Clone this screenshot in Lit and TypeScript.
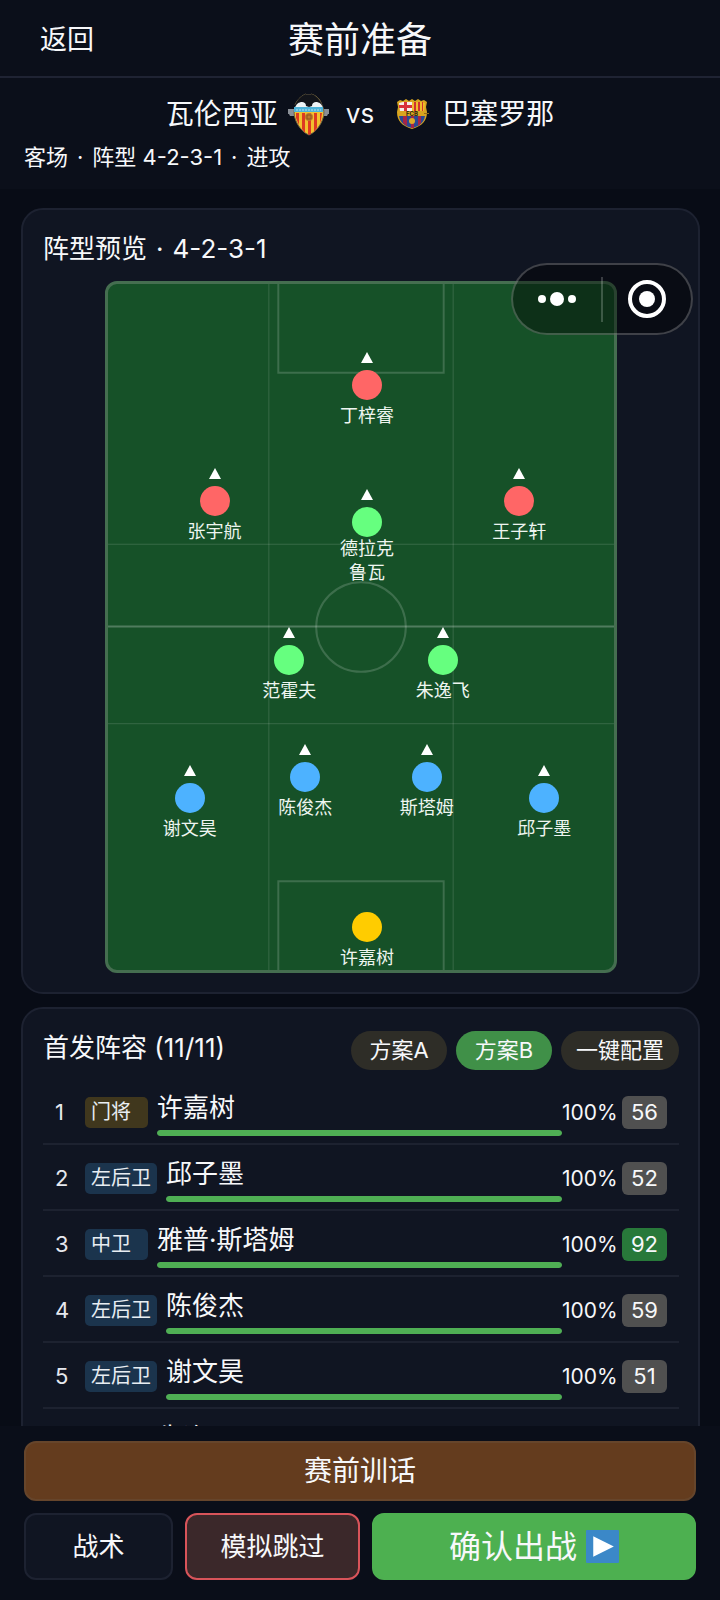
import { LitElement, css, html, nothing, svg } from "lit";
import { customElement, property, state } from "lit/decorators.js";
import { classMap } from "lit/directives/class-map.js";
import { styleMap } from "lit/directives/style-map.js";

type Role = "gk" | "def" | "mid" | "fwd";

interface Spot {
  name: string;
  role: Role;
  x: number;
  y: number;
}

interface Starter {
  name: string;
  position: string;
  role: Role;
  stamina: number;
  rating: number;
}

// pitch units, spots are converted to percentages when drawn
const PITCH_W = 508;
const PITCH_H = 688;

const SPOTS: Spot[] = [
  { name: "丁梓睿", role: "fwd", x: 260, y: 101 },
  { name: "张宇航", role: "fwd", x: 107, y: 218 },
  { name: "德拉克鲁瓦", role: "mid", x: 260, y: 239 },
  { name: "王子轩", role: "fwd", x: 413, y: 218 },
  { name: "范霍夫", role: "mid", x: 182, y: 377 },
  { name: "朱逸飞", role: "mid", x: 336, y: 377 },
  { name: "陈俊杰", role: "def", x: 198, y: 494 },
  { name: "斯塔姆", role: "def", x: 320, y: 494 },
  { name: "谢文昊", role: "def", x: 82, y: 515 },
  { name: "邱子墨", role: "def", x: 438, y: 515 },
  { name: "许嘉树", role: "gk", x: 260, y: 645 },
];

const STARTERS: Starter[] = [
  { name: "许嘉树", position: "门将", role: "gk", stamina: 100, rating: 56 },
  { name: "邱子墨", position: "左后卫", role: "def", stamina: 100, rating: 52 },
  { name: "雅普·斯塔姆", position: "中卫", role: "def", stamina: 100, rating: 92 },
  { name: "陈俊杰", position: "左后卫", role: "def", stamina: 100, rating: 59 },
  { name: "谢文昊", position: "左后卫", role: "def", stamina: 100, rating: 51 },
  { name: "朱逸飞", position: "后腰", role: "mid", stamina: 100, rating: 58 },
];

@customElement("formation-pitch")
export class FormationPitch extends LitElement {
  @property({ attribute: false }) spots: Spot[] = [];

  render() {
    return html`
      <div class="pitch">
        <svg class="lines" viewBox="0 0 508 688" preserveAspectRatio="none">
          <g class="zones">
            <path d="M161.5 0V688M346.5 0V688M0 261H508M0 441H508" />
          </g>
          <path class="half" d="M0 343.5H508" />
          <g class="marks">
            <rect x="171" y="-2" width="166" height="91" />
            <rect x="171" y="599" width="166" height="91" />
            <circle cx="254" cy="344" r="45" />
          </g>
        </svg>
        ${this.spots.map((spot) => this.renderSpot(spot))}
      </div>
    `;
  }

  renderSpot(spot: Spot) {
    const place = {
      left: `${(spot.x / PITCH_W) * 100}%`,
      top: `${(spot.y / PITCH_H) * 100}%`,
    };
    return html`
      <div class="spot" style=${styleMap(place)}>
        ${spot.role === "gk"
          ? nothing
          : html`<svg class="arrow" viewBox="0 0 12 11"><path d="M6 0L12 11H0z" /></svg>`}
        <span class="dot ${spot.role}"></span>
        <span class="name">${spot.name}</span>
      </div>
    `;
  }

  static styles = css`
    :host {
      display: block;
      width: 100%;
      max-width: 512px;
      margin: 0 auto;
    }

    .pitch {
      position: relative;
      box-sizing: border-box;
      aspect-ratio: 512 / 692;
      background: #165128;
      border: 3px solid #456e50;
      border-radius: 12px;
    }

    .lines {
      display: block;
      width: 100%;
      height: 100%;
      fill: none;
      stroke: #ffffff;
    }

    .zones {
      stroke-opacity: 0.15;
      stroke-width: 1;
    }

    .half {
      stroke-opacity: 0.25;
      stroke-width: 2;
    }

    .marks {
      stroke-opacity: 0.17;
      stroke-width: 2;
    }

    /* the anchor is the centre of the dot, 33px below the top of the marker */
    .spot {
      position: absolute;
      display: flex;
      flex-direction: column;
      align-items: center;
      width: 56px;
      margin: -33px 0 0 -28px;
    }

    .arrow {
      flex: none;
      width: 12px;
      height: 11px;
      fill: #ffffff;
      margin-bottom: 7px;
    }

    .dot {
      flex: none;
      width: 30px;
      height: 30px;
      border-radius: 50%;
    }

    .dot.gk {
      background: #ffcc00;
      margin-top: 18px;
    }

    .dot.def {
      background: #4db2ff;
    }

    .dot.mid {
      background: #66ff7f;
    }

    .dot.fwd {
      background: #ff6666;
    }

    .name {
      display: flex;
      align-items: center;
      min-height: 32px;
      font-size: 18px;
      line-height: 24px;
      text-align: center;
      color: #eef5f0;
    }
  `;
}

@customElement("lineup-row")
export class LineupRow extends LitElement {
  @property({ type: Number }) index = 1;
  @property({ attribute: false }) player!: Starter;

  render() {
    const { name, position, role, stamina, rating } = this.player;
    return html`
      <div class="row">
        <span class="index">${this.index}</span>
        <span class="position ${role}">${position}</span>
        <div class="main">
          <span class="name">${name}</span>
          <div class="track">
            <div class="fill" style=${styleMap({ width: `${stamina}%` })}></div>
          </div>
        </div>
        <span class="stamina">${stamina}%</span>
        <span class=${classMap({ rating: true, high: rating >= 80 })}>${rating}</span>
      </div>
    `;
  }

  static styles = css`
    :host {
      display: block;
    }

    .row {
      display: flex;
      align-items: center;
      box-sizing: border-box;
      height: 66px;
      padding: 2px 12px 0;
      border-bottom: 2px solid #1d2230;
    }

    .index {
      width: 30px;
      font-size: 22px;
      color: #e6e8ee;
    }

    .position {
      box-sizing: border-box;
      min-width: 63px;
      margin-right: 9px;
      padding: 0 6px;
      border-radius: 5px;
      font-size: 20px;
      line-height: 31px;
      color: #e8edf2;
      white-space: nowrap;
    }

    .position.gk {
      background: #40371d;
    }

    .position.def {
      background: #1b344d;
    }

    .position.mid {
      background: #1c4130;
    }

    .main {
      flex: 1;
      min-width: 0;
      display: flex;
      flex-direction: column;
      gap: 2px;
    }

    .name {
      font-size: 26px;
      line-height: 40px;
      white-space: nowrap;
    }

    .track {
      height: 6px;
      border-radius: 3px;
      background: #262b38;
      overflow: hidden;
    }

    .fill {
      height: 100%;
      border-radius: 3px;
      background: #4faf54;
    }

    .stamina {
      width: 60px;
      font-size: 21px;
    }

    .rating {
      width: 45px;
      border-radius: 6px;
      font-size: 22px;
      line-height: 33px;
      text-align: center;
      background: #505050;
    }

    .rating.high {
      background: #28793a;
    }
  `;
}

@customElement("app-root")
export class AppRoot extends LitElement {
  @state() plan = "B";

  homeCrest() {
    return svg`
      <svg class="crest" viewBox="0 0 44 44" aria-hidden="true">
        <path d="M2 17h6v7H4l-1-2H2zM43 17h-6v7h4l1-2h1z" fill="#8a8f96" />
        <path d="M9 13C12 6 17 3 20 2l1 1h3l1-1c4 1 9 4 11 11 3 6 2 11 0 16-3 7-8 12-13 14-5-2-10-7-13-14-2-5-3-10 0-16z" fill="#f2c230" stroke="#6b5f45" />
        <path d="M8 16C11 6 17 3 20 2l1 1h3l1-1c4 1 10 5 12 14z" fill="#12141a" />
        <path d="M9 16c1-4 4-6 7-6 2 0 4 1 4 4l3 1 3-1c0-3 2-4 4-4 3 0 6 2 7 6z" fill="#eef3f5" />
        <path d="M8 15h29v5H8z" fill="#4eb3d8" />
        <path d="M10 18h25" stroke="#b7dfec" stroke-dasharray="2 1" />
        <path d="M10 21h3v12l-3-7zM16 21h3v20l-3-4zM22 21h3v21l-2 1-1-1zM28 21h3v15l-3 4zM34 21h2l-1 7-1 3z" fill="#de3b22" />
        <circle cx="23" cy="25" r="4" fill="#c17a2b" />
        <path d="M21 23h4v4h-4z" fill="none" stroke="#8f5520" />
      </svg>
    `;
  }

  awayCrest() {
    return svg`
      <svg class="crest" viewBox="0 0 44 44" aria-hidden="true">
        <path d="M7 10l3-2 3 1 3-2 3 2 3-2 3 2 3-2 3 2 3-1 3 2-1 5 1 5c0 9-5 14-15 17C12 34 7 29 7 20l1-5z" fill="#d9a520" />
        <path d="M9 11l4-1h9v9H10z" fill="#f4efe9" />
        <path d="M14 10h3v9h-3zM9 13h13v3H9z" fill="#d8323a" />
        <path d="M22 10h9l4 1-1 8H22z" fill="#f0bc2c" />
        <path d="M24 10h2v9h-2zM28 10h2v9h-2zM32 10h1v9h-1z" fill="#cf3330" />
        <path d="M9 24h26c-1 6-5 10-13 12C14 34 10 30 9 24z" fill="#2a4a94" />
        <path d="M13 24h4v10l-4-3zM21 24h3v12h-3zM28 24h3v7l-3 3z" fill="#a52547" />
        <circle cx="22" cy="29" r="3" fill="#e0ac28" />
        <path d="M34 21h5v1h-5z" fill="#8f6a1c" />
        <text x="22" y="24" text-anchor="middle" font-size="6" font-weight="700" fill="#2b2410">FCB</text>
      </svg>
    `;
  }

  planButton(id: string) {
    return html`
      <button
        class=${classMap({ chip: true, active: this.plan === id })}
        @click=${() => (this.plan = id)}
      >方案${id}</button>
    `;
  }

  render() {
    return html`
      <div class="page">
        <header class="topbar">
          <button class="back">返回</button>
          <h1>赛前准备</h1>
        </header>

        <section class="match">
          <div class="teams">
            <span class="team">瓦伦西亚</span>
            ${this.homeCrest()}
            <span class="vs">vs</span>
            ${this.awayCrest()}
            <span class="team">巴塞罗那</span>
          </div>
          <p class="info dotted">
            <span>客场</span><span>·</span><span>阵型 4-2-3-1</span><span>·</span><span>进攻</span>
          </p>
        </section>

        <main class="content">
          <section class="card">
            <h2 class="dotted"><span>阵型预览</span><span>·</span><span>4-2-3-1</span></h2>
            <formation-pitch .spots=${SPOTS}></formation-pitch>
          </section>

          <section class="card">
            <div class="card-head">
              <h2>首发阵容 (11/11)</h2>
              <div class="chips">
                ${this.planButton("A")} ${this.planButton("B")}
                <button class="chip">一键配置</button>
              </div>
            </div>
            ${STARTERS.map(
              (player, i) => html`
                <lineup-row .index=${i + 1} .player=${player}></lineup-row>
              `
            )}
          </section>
        </main>

        <footer class="actions">
          <button class="action talk">赛前训话</button>
          <div class="action-row">
            <button class="action">战术</button>
            <button class="action skip">模拟跳过</button>
            <button class="action confirm">
              确认出战
              <svg class="play" viewBox="0 0 32 32" aria-hidden="true">
                <rect width="32" height="32" rx="1" fill="#3b88c8" />
                <path d="M7 6l20 10L7 26z" fill="#ffffff" />
              </svg>
            </button>
          </div>
        </footer>

        <div class="capsule">
          <button aria-label="更多">
            <svg width="44" height="40" viewBox="0 0 44 40">
              <circle cx="7" cy="20" r="4" />
              <circle cx="22" cy="20" r="7" />
              <circle cx="37" cy="20" r="4" />
            </svg>
          </button>
          <span class="divider"></span>
          <button aria-label="关闭">
            <svg width="44" height="40" viewBox="0 0 44 40">
              <circle class="ring" cx="22" cy="20" r="17" />
              <circle cx="22" cy="20" r="8" />
            </svg>
          </button>
        </div>
      </div>
    `;
  }

  static styles = css`
    :host {
      display: block;
      font-family: Inter, "Noto Sans CJK SC", sans-serif;
      font-weight: 400;
      color: #f7f8fa;
    }

    .page {
      display: flex;
      flex-direction: column;
      height: 100vh;
      overflow: hidden;
      background: #080c16;
    }

    h1,
    h2,
    p {
      margin: 0;
      font-weight: 400;
    }

    button {
      margin: 0;
      padding: 0;
      border: 0;
      background: none;
      font: inherit;
      color: inherit;
      cursor: pointer;
    }

    .topbar {
      display: grid;
      grid-template-columns: 1fr auto 1fr;
      align-items: center;
      height: 72px;
      padding: 4px 40px 0;
      background: #0b0f1a;
      border-bottom: 2px solid #1f2333;
    }

    .back {
      justify-self: start;
      font-size: 27px;
      line-height: 40px;
    }

    h1 {
      font-size: 36px;
      line-height: 52px;
    }

    .match {
      padding: 14px 24px 16px;
      background: #0b0f1a;
    }

    .teams {
      display: flex;
      align-items: center;
      justify-content: center;
      gap: 8px;
      font-size: 28px;
      line-height: 44px;
    }

    .vs {
      margin: 0 8px;
      font-size: 26px;
    }

    .crest {
      width: 44px;
      height: 44px;
    }

    .dotted {
      display: flex;
      gap: 9px;
    }

    .info {
      margin-top: 5px;
      font-size: 22px;
      line-height: 32px;
    }

    .content {
      flex: 1;
      min-height: 0;
      overflow-y: auto;
      scrollbar-width: none;
      padding: 19px 20px 0 21px;
    }

    .card {
      padding: 22px 19px 19px 20px;
      margin-bottom: 13px;
      background: #101522;
      border: 2px solid #1d2231;
      border-radius: 22px;
    }

    h2 {
      font-size: 26px;
      line-height: 34px;
    }

    .card > h2 {
      margin-bottom: 15px;
    }

    .card-head {
      display: flex;
      align-items: flex-start;
      justify-content: space-between;
      margin-bottom: 9px;
    }

    .chips {
      display: flex;
      gap: 9px;
    }

    .chip {
      min-width: 96px;
      height: 39px;
      padding: 0 15px;
      border-radius: 20px;
      font-size: 22px;
      line-height: 39px;
      background: #2e2d27;
    }

    .chip.active {
      background: #409048;
    }

    .actions {
      display: flex;
      flex-direction: column;
      gap: 12px;
      padding: 15px 24px 20px;
      background: #0a0e19;
    }

    .action-row {
      display: grid;
      grid-template-columns: 23fr 27fr 50fr;
      gap: 12px;
    }

    .action {
      box-sizing: border-box;
      height: 67px;
      border: 2px solid #1d2231;
      border-radius: 12px;
      font-size: 26px;
      line-height: 32px;
      background: #101522;
    }

    .action.talk {
      height: 60px;
      font-size: 28px;
      border-color: #66452b;
      background: #643c1e;
    }

    .action.skip {
      border-color: #d8545a;
      background: #3b282a;
    }

    .action.confirm {
      display: flex;
      align-items: center;
      justify-content: center;
      gap: 9px;
      font-size: 32px;
      border-color: #4db050;
      background: #4db050;
    }

    .play {
      width: 33px;
      height: 33px;
    }

    /* floats over the page */
    .capsule {
      position: fixed;
      top: 263px;
      right: 27px;
      display: flex;
      align-items: center;
      box-sizing: border-box;
      width: 182px;
      height: 72px;
      border: 2px solid rgb(255 255 255 / 0.22);
      border-radius: 36px;
      background: rgb(0 0 0 / 0.4);
    }

    .capsule button {
      flex: 1;
      height: 40px;
    }

    .capsule svg {
      display: block;
      margin: 0 auto;
      fill: #ffffff;
    }

    .capsule .ring {
      fill: none;
      stroke: #ffffff;
      stroke-width: 4;
    }

    .divider {
      width: 2px;
      height: 45px;
      background: rgb(255 255 255 / 0.2);
    }
  `;
}
